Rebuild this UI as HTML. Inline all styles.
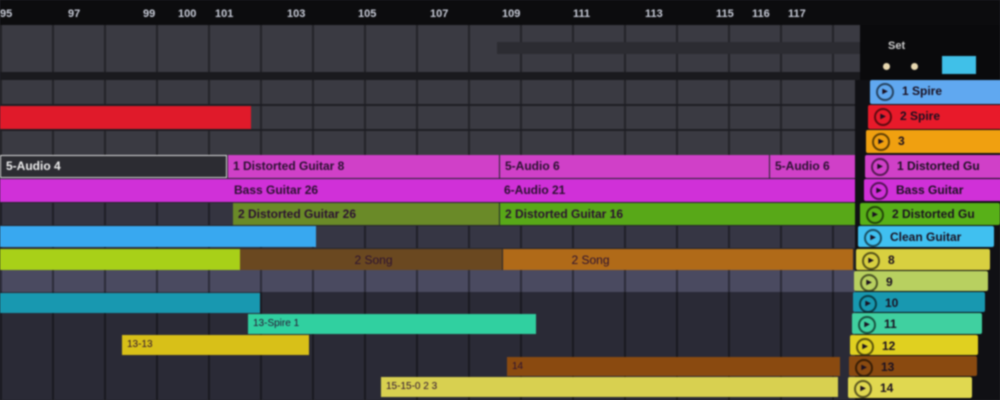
<!DOCTYPE html><html><head><style>
body{margin:0;width:1000px;height:400px;overflow:hidden;background:#26262c;position:relative;font-family:"Liberation Sans",sans-serif;}
#w{position:absolute;left:0;top:0;width:1000px;height:400px;filter:blur(0.8px)}
div{position:absolute;box-sizing:border-box}
.g{background-image:repeating-linear-gradient(90deg,rgba(0,0,0,.4) 0 2px,transparent 2px 52px);}
.c{font-size:12px;line-height:22px;padding-left:5px;white-space:nowrap;overflow:hidden;color:#2a1030;font-weight:bold}
.h{left:862px;width:140px;font-size:12px;font-weight:bold;line-height:22px;padding-left:32px;color:#1a1020;white-space:nowrap;overflow:hidden;border-radius:2px}
.h:before{content:"▸";position:absolute;left:6px;top:3px;width:14px;height:14px;border:2px solid rgba(0,0,0,.6);border-radius:50%;font-size:10px;line-height:14px;text-align:center}
.n{color:#c8ccd8;font-size:11px;font-weight:bold;top:8px}
</style></head><body><div id="w">
<div style="left:0;top:0;width:1000px;height:25px;background:#0c0c0e"></div>
<div class="n" style="left:0">95</div><div class="n" style="left:68px">97</div><div class="n" style="left:143px">99</div><div class="n" style="left:178px">100</div><div class="n" style="left:215px">101</div><div class="n" style="left:287px">103</div><div class="n" style="left:358px">105</div><div class="n" style="left:430px">107</div><div class="n" style="left:502px">109</div><div class="n" style="left:573px">111</div><div class="n" style="left:645px">113</div><div class="n" style="left:716px">115</div><div class="n" style="left:752px">116</div><div class="n" style="left:788px">117</div>
<div class="g" style="left:0;top:25px;width:875px;height:47px;background-color:#3a3a42"></div>
<div style="left:497px;top:42px;width:378px;height:12px;background:#2c2c32"></div>
<div style="left:0;top:72px;width:875px;height:8px;background:#1a1a1e"></div>
<div style="left:860px;top:25px;width:140px;height:55px;background:#0a0a0c"></div>
<div style="left:888px;top:40px;color:#ccc;font-size:11px;font-weight:bold">Set</div>
<div style="left:883px;top:63px;width:7px;height:7px;border-radius:50%;background:#e8d8b0"></div>
<div style="left:911px;top:63px;width:7px;height:7px;border-radius:50%;background:#e8d8b0"></div>
<div style="left:942px;top:56px;width:34px;height:18px;background:#40c0e8"></div>
<div class="g" style="left:0;top:80px;width:862px;height:75px;background-color:#3a3a42"></div>
<div style="left:0;top:104px;width:862px;height:2px;background:#1e1e24"></div>
<div style="left:0;top:129px;width:862px;height:2px;background:#1e1e24"></div>
<div style="left:0;top:106px;width:251px;height:23px;background:#e01a2a"></div>
<div class="c" style="left:0;top:155px;width:227px;height:23px;background:#2c2c32;border:1.5px solid #ddd;color:#eee;line-height:20px">5-Audio 4</div>
<div class="c" style="left:228px;top:155px;width:271px;height:23px;background:#d040c8">1 Distorted Guitar 8</div>
<div class="c" style="left:500px;top:155px;width:269px;height:23px;background:#d040c8">5-Audio 6</div>
<div class="c" style="left:770px;top:155px;width:92px;height:23px;background:#d040c8">5-Audio 6</div>
<div class="c" style="left:0;top:179px;width:862px;height:23px;background:#d030d8;padding-left:234px">Bass Guitar 26<span style="position:absolute;left:504px">6-Audio 21</span></div>
<div class="g" style="left:0;top:203px;width:233px;height:22px;background-color:#343440"></div>
<div class="c" style="left:233px;top:203px;width:266px;height:22px;background:#6a8a28">2 Distorted Guitar 26</div>
<div class="c" style="left:500px;top:203px;width:357px;height:22px;background:#58a818">2 Distorted Guitar 16</div>
<div class="g" style="left:0;top:226px;width:860px;height:22px;background-color:#363644"></div>
<div style="left:0;top:226px;width:316px;height:21px;background:#38a8f0"></div>
<div style="left:0;top:249px;width:240px;height:21px;background:#a8d018"></div>
<div class="c" style="left:240px;top:249px;width:262px;height:21px;background:#6a4820;text-align:center;font-weight:normal">2 Song</div>
<div class="c" style="left:503px;top:249px;width:350px;height:21px;background:#b06a18;text-align:center;font-weight:normal;padding-right:180px">2 Song</div>
<div class="g" style="left:0;top:270px;width:855px;height:22px;background-color:#4a4a60"></div>
<div class="g" style="left:0;top:292px;width:855px;height:108px;background-color:#2a2a36"></div>
<div style="left:0;top:293px;width:260px;height:20px;background:#1898b0"></div>
<div class="c" style="left:248px;top:314px;width:288px;height:20px;background:#30d0a0;line-height:20px;font-weight:normal;font-size:10px">13-Spire 1</div>
<div class="c" style="left:122px;top:335px;width:187px;height:20px;background:#d8c018;line-height:20px;font-weight:normal;font-size:10px">13-13</div>
<div class="c" style="left:507px;top:357px;width:333px;height:19px;background:#8a4a10;line-height:19px;font-weight:normal;font-size:10px">14</div>
<div class="c" style="left:381px;top:377px;width:457px;height:20px;background:#d8d050;line-height:20px;font-weight:normal;font-size:10px">15-15-0 2 3</div>
<div style="left:855px;top:80px;width:145px;height:320px;background:#101014"></div>
<div class="h" style="top:80px;height:24px;background:#60a8f0;left:870px">1 Spire</div>
<div class="h" style="top:105px;height:24px;background:#e81a2a;left:868px">2 Spire</div>
<div class="h" style="top:130px;height:23px;background:#f0a010;left:866px">3</div>
<div class="h" style="top:155px;height:23px;background:#d040c8;left:865px">1 Distorted Gu</div>
<div class="h" style="top:179px;height:22px;background:#d030d8;left:864px">Bass Guitar</div>
<div class="h" style="top:203px;height:22px;background:#58b018;left:860px">2 Distorted Gu</div>
<div class="h" style="top:226px;height:21px;background:#40c0f0;left:858px;width:136px">Clean Guitar</div>
<div class="h" style="top:249px;height:21px;background:#d8d040;left:856px;width:134px">8</div>
<div class="h" style="top:271px;height:20px;background:#b8d060;left:854px;width:134px">9</div>
<div class="h" style="top:292px;height:20px;background:#1898b0;left:853px;width:132px">10</div>
<div class="h" style="top:313px;height:21px;background:#40d0a0;left:852px;width:130px">11</div>
<div class="h" style="top:335px;height:20px;background:#e0d020;left:850px;width:128px">12</div>
<div class="h" style="top:356px;height:20px;background:#8a4a10;left:849px;width:128px">13</div>
<div class="h" style="top:377px;height:21px;background:#e0d850;left:848px;width:124px">14</div>
</div></body></html>
